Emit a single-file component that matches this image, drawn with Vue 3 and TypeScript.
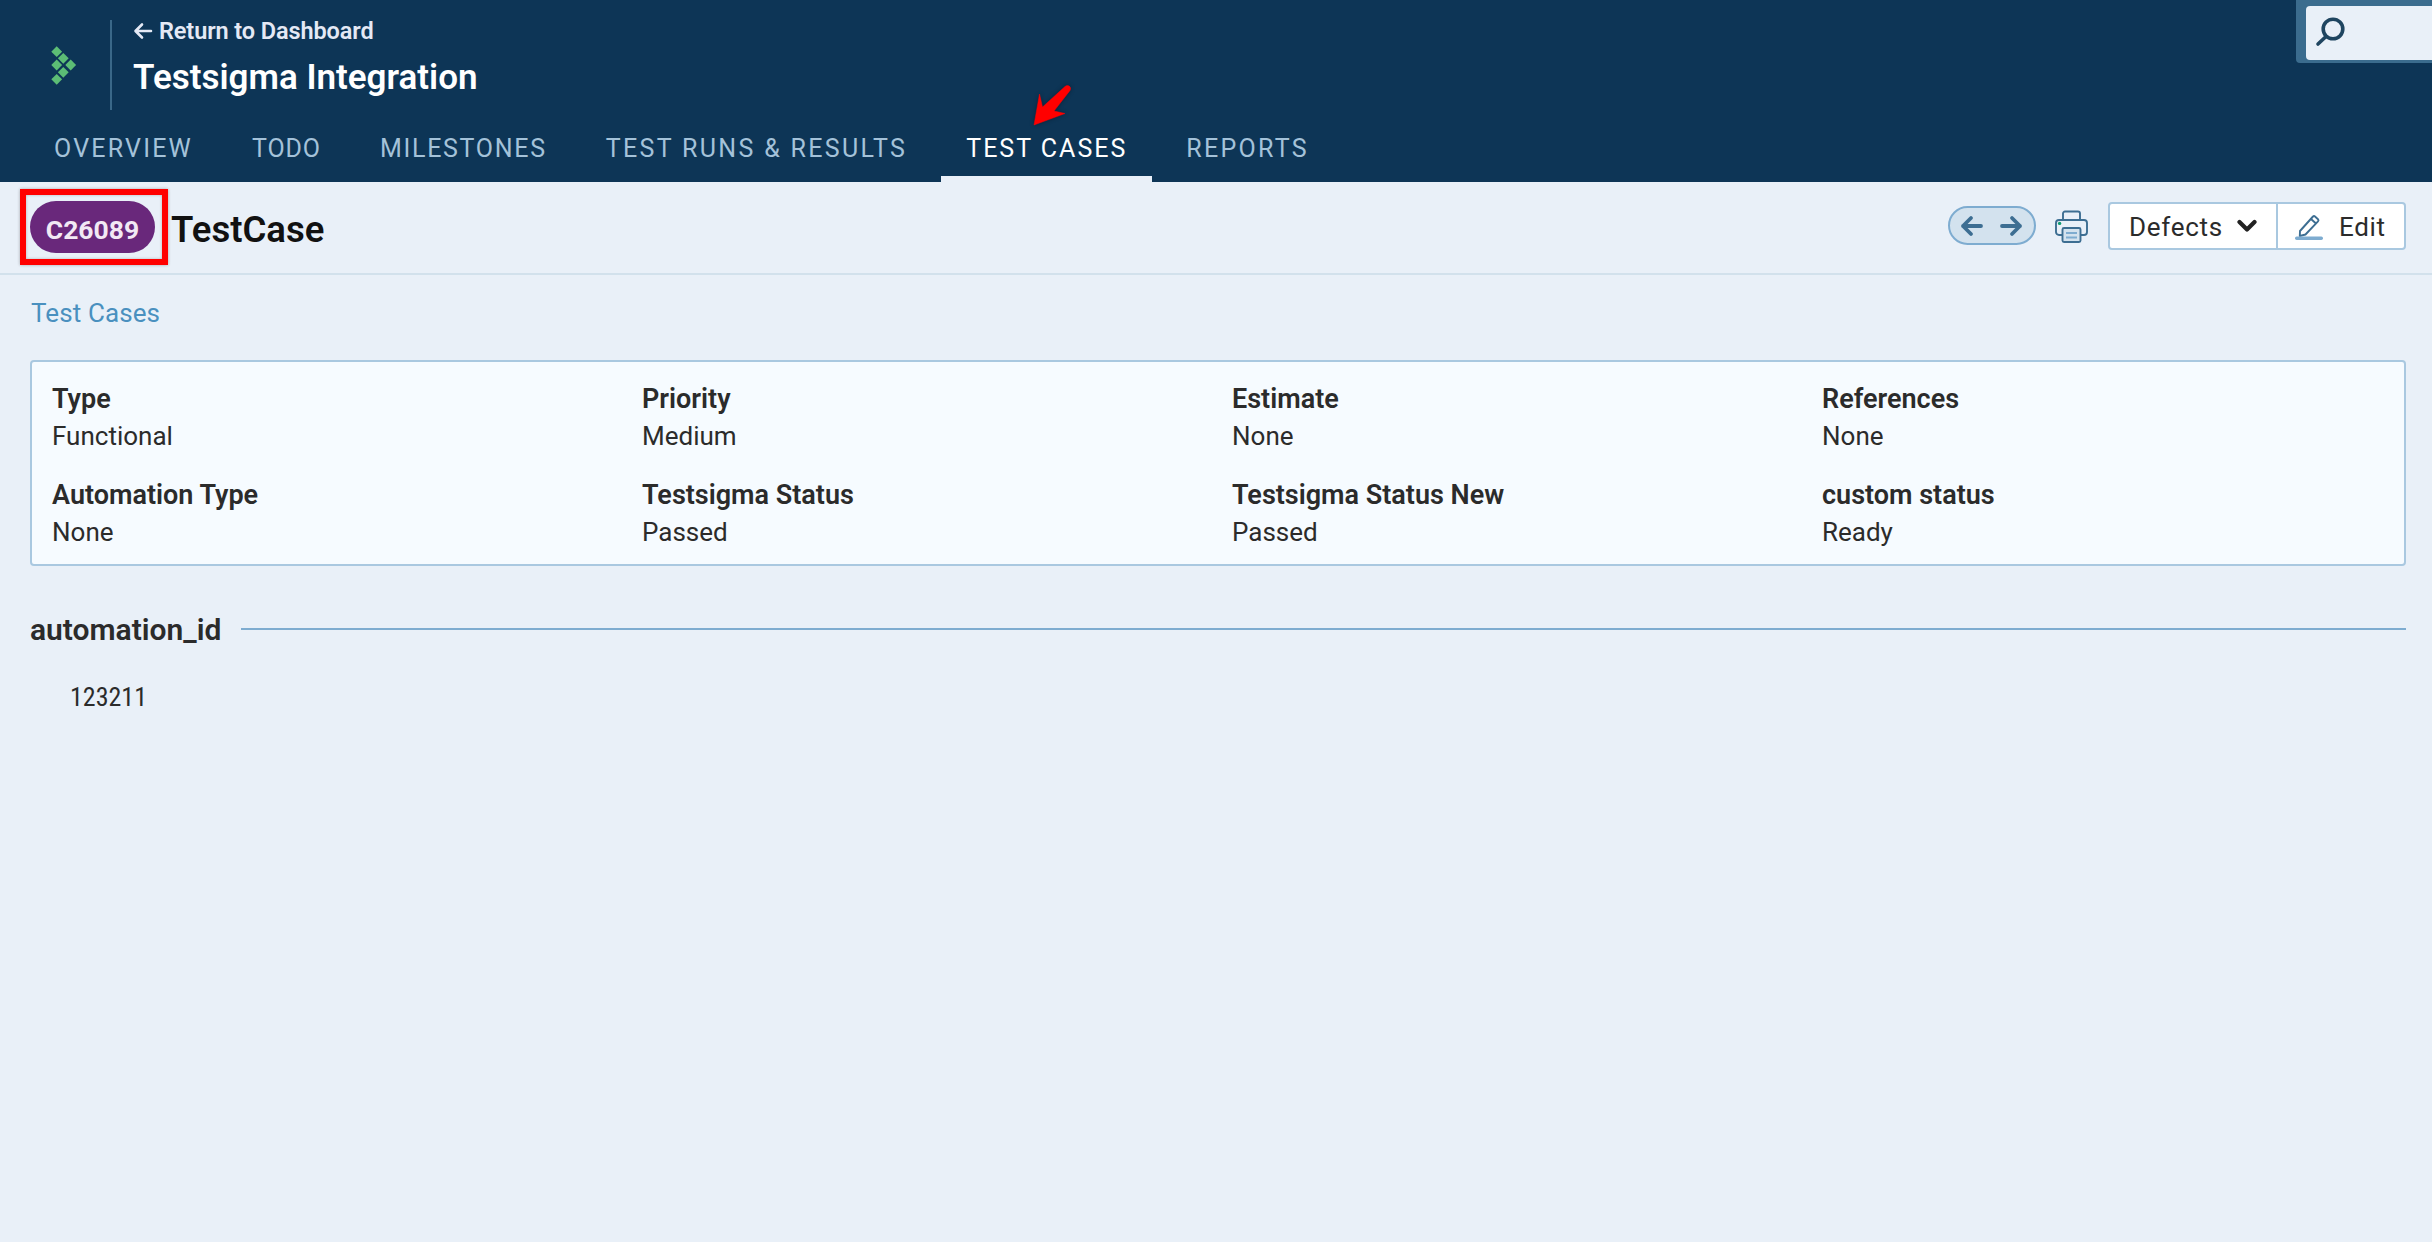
<script setup lang="ts">
const tabs: { label: string; spacing: number; active?: boolean }[] = [
  { label: 'OVERVIEW', spacing: 2.2 },
  { label: 'TODO', spacing: 0.9 },
  { label: 'MILESTONES', spacing: 1.7 },
  { label: 'TEST RUNS & RESULTS', spacing: 2.33 },
  { label: 'TEST CASES', spacing: 2, active: true },
  { label: 'REPORTS', spacing: 2.3 },
]
const fields: { label: string; value: string }[] = [
  { label: 'Type', value: 'Functional' },
  { label: 'Priority', value: 'Medium' },
  { label: 'Estimate', value: 'None' },
  { label: 'References', value: 'None' },
  { label: 'Automation Type', value: 'None' },
  { label: 'Testsigma Status', value: 'Passed' },
  { label: 'Testsigma Status New', value: 'Passed' },
  { label: 'custom status', value: 'Ready' },
]
const diamonds: [number, number][] = [
  [6.7, 6.7], [13.3, 13.3], [20.7, 20], [6.7, 20], [13.3, 27.3], [6.7, 34.3],
]
</script>

<template>
  <div class="page">
    <header class="header">
      <div class="top">
        <div class="logo">
          <svg width="28" height="41" viewBox="0 0 28 41">
            <polygon
              v-for="(d, i) in diamonds"
              :key="i"
              :points="`${d[0]},${d[1] - 5.4} ${d[0] + 5.4},${d[1]} ${d[0]},${d[1] + 5.4} ${d[0] - 5.4},${d[1]}`"
              fill="#5cbd75"
            />
          </svg>
        </div>
        <div class="titles">
          <a class="back">
            <svg width="20" height="18" viewBox="0 0 20 18" fill="none" stroke="#e4e9f5" stroke-width="2.6" stroke-linecap="round" stroke-linejoin="round">
              <path d="M18 9H3M9 2.5 2.500 9 9 15.5" />
            </svg>
            <span>Return to Dashboard</span>
          </a>
          <h1 class="title">Testsigma Integration</h1>
        </div>
      </div>
      <nav class="tabs">
        <a
          v-for="t in tabs"
          :key="t.label"
          class="tab"
          :class="{ active: t.active }"
          :style="{ letterSpacing: `${t.spacing}px` }"
        >{{ t.label }}</a>
      </nav>
      <svg class="arrow" width="44" height="46" viewBox="0 0 44 46">
        <path d="M2 43 7.5 12 10.5 25 33 4.5c3-2.5 7 .5 5 4L22 29l11 2.5Z" fill="#f00" stroke="#f00" stroke-width=".5" stroke-linejoin="round" />
      </svg>
      <div class="search">
        <div class="search-box">
          <svg width="30" height="32" viewBox="0 0 30 32" fill="none" stroke="#1f4560" stroke-linecap="round">
            <circle cx="18" cy="12" r="9.8" stroke-width="3.6" />
            <path d="M10.5 20 3 27" stroke-width="3.6" />
          </svg>
        </div>
      </div>
    </header>

    <div class="case-bar">
      <div class="case-left">
        <div class="highlight"><span class="pill">C26089</span></div>
        <h2 class="case-name">TestCase</h2>
      </div>
      <div class="case-right">
        <div class="pager">
          <svg width="24" height="22" viewBox="0 0 24 22" fill="none" stroke="#3d6e92" stroke-width="3.8" stroke-linecap="round" stroke-linejoin="round">
            <path d="M21 11H3M11 3 3 11l8 8" />
          </svg>
          <svg width="24" height="22" viewBox="0 0 24 22" fill="none" stroke="#3d6e92" stroke-width="3.8" stroke-linecap="round" stroke-linejoin="round">
            <path d="M3 11h18M13 3l8 8-8 8" />
          </svg>
        </div>
        <svg class="printer" width="33" height="33" viewBox="0 0 33 33" fill="none" stroke="#3d6e92" stroke-width="1.9">
          <path d="M8 10V3.5A2 2 0 0 1 10 1.5h13a2 2 0 0 1 2 2V10" />
          <path d="M7 25H4a3 3 0 0 1-3-3V13a3 3 0 0 1 3-3h25a3 3 0 0 1 3 3v9a3 3 0 0 1-3 3h-3" />
          <rect x="7.5" y="18" width="18" height="14" rx="1.5" fill="#d3e2ee" />
          <path d="M11 23h11M11 27.5h11" stroke="#7eacd0" />
          <circle cx="4.6" cy="13.4" r="1.7" fill="#0d9a70" stroke="none" />
        </svg>
        <div class="btn-group">
          <button class="btn defects">
            <span class="btn-text">Defects</span>
            <svg width="20" height="14" viewBox="0 0 20 14" fill="none" stroke="#222" stroke-width="4.2" stroke-linecap="round" stroke-linejoin="round">
              <path d="M2.5 3 10 10.500 17.500 3" />
            </svg>
          </button>
          <button class="btn edit">
            <svg width="28" height="28" viewBox="0 0 28 28" fill="none">
              <path d="M5 19 18 4.500a1.500 1.500 0 0 1 2 0l3 2.700a1.500 1.500 0 0 1 0 2.100L10.500 22.500 4.800 24Z" stroke="#3d6e92" stroke-width="1.900" stroke-linejoin="round" />
              <path d="M16 7l5 4.500" stroke="#3d6e92" stroke-width="1.900" />
              <rect x="0" y="24.500" width="28" height="3.500" rx="1.700" fill="#7eacd0" />
            </svg>
            <span class="btn-text">Edit</span>
          </button>
        </div>
      </div>
    </div>

    <main class="content">
      <a class="crumb">Test Cases</a>
      <section class="card">
        <div v-for="f in fields" :key="f.label" class="field">
          <div class="f-label">{{ f.label }}</div>
          <div class="f-value">{{ f.value }}</div>
        </div>
      </section>
      <div class="section-head">
        <span class="section-title">automation_id</span>
        <span class="section-rule"></span>
      </div>
      <div class="section-body">123211</div>
    </main>
  </div>
</template>

<style>
html, body { margin: 0; background: #e9f0f8; }
</style>

<style scoped>
.page {
  min-height: 1242px;
  background: #e9f0f8;
  font-family: Roboto, "Liberation Sans", sans-serif;
  color: #2b2b2b;
  overflow: hidden;
}
.header {
  position: relative;
  height: 182px;
  background: #0d3556;
  display: flex;
  flex-direction: column;
}
.top { display: flex; height: 124px; }
.logo {
  width: 112px;
  height: 90px;
  margin-top: 20px;
  border-right: 2px solid #3a6888;
  display: flex;
  align-items: center;
  padding-left: 50px;
  box-sizing: border-box;
}
.titles { padding-left: 21px; display: flex; flex-direction: column; }
.back {
  display: flex;
  align-items: center;
  gap: 6px;
  height: 24px;
  margin-top: 19px;
  color: #e4e9f5;
  font-size: 23.5px;
  font-weight: 600;
  letter-spacing: -0.1px;
}
.title {
  margin: 15px 0 0;
  color: #fff;
  font-size: 35px;
  line-height: 40px;
  font-weight: 600;
}
.tabs { display: flex; gap: 9px; padding-left: 29px; height: 58px; }
.tab {
  padding: 0 25px;
  height: 52px;
  line-height: 50px;
  font-size: 25px;
  color: #a4c2d9;
  font-weight: 400;
  white-space: nowrap;
}
.tab.active { color: #fff; border-bottom: 6px solid #e9f0f8; }
.arrow { position: absolute; left: 1032px; top: 82px; filter: drop-shadow(0 0 2px rgba(0,0,0,.35)); }
.search {
  position: absolute;
  left: 2296px;
  right: 0;
  top: 0;
  height: 63px;
  box-sizing: border-box;
  padding: 6px 0 3px 10px;
  background: #3b6c8e;
  border-bottom-left-radius: 4px;
}
.search-box {
  height: 100%;
  background: #e9f0f8;
  border-radius: 4px 0 0 4px;
  display: flex;
  align-items: center;
  padding-left: 9px;
}
.case-bar {
  height: 91px;
  box-sizing: content-box;
  border-bottom: 2px solid #d2e1ec;
  display: flex;
  align-items: flex-start;
  justify-content: space-between;
  padding: 0 26px 0 20px;
}
.case-left { display: flex; align-items: center; margin-top: 7px; }
.highlight {
  width: 148px;
  height: 76px;
  box-sizing: border-box;
  border: 6px solid #f00;
  box-shadow: 0 0 3px rgba(0,0,0,.3), inset 0 0 3px rgba(0,0,0,.25);
  display: flex;
  align-items: center;
  padding-left: 4px;
}
.pill {
  width: 125px;
  height: 52px;
  padding-top: 4px;
  box-sizing: border-box;
  border-radius: 26px;
  background: #69287b;
  color: #f2e9f4;
  font-size: 26.500px;
  font-weight: 700;
  display: flex;
  align-items: center;
  justify-content: center;
}
.case-name { margin: 4px 0 0 3px; font-size: 36.500px; font-weight: 600; color: #111; }
.case-right { display: flex; align-items: flex-start; margin-top: 20px; }
.pager {
  width: 88px;
  height: 39px;
  margin-top: 4px;
  box-sizing: border-box;
  border: 2px solid #7eacd0;
  border-radius: 20px;
  background: #d3e2ee;
  display: flex;
  align-items: center;
  justify-content: space-between;
  padding: 0 11px 0 10px;
}
.printer { margin: 8px 20px 0 19px; }
.btn-group {
  width: 298px;
  height: 48px;
  box-sizing: border-box;
  border: 2px solid #a9c8e0;
  border-radius: 4px;
  background: #fff;
  display: flex;
}
.btn {
  border: 0;
  background: none;
  padding: 0;
  font: inherit;
  font-size: 26px;
  color: #2b2b2b;
  letter-spacing: 0.7px;
  display: flex;
  align-items: center;
}
.btn-text { padding-top: 2px; }
.defects {
  width: 168px;
  border-right: 2px solid #a9c8e0;
  padding-left: 19px;
  gap: 14px;
}
.edit { flex: 1; padding-left: 17px; gap: 16px; }
.content { padding: 23px 26px 0 30px; }
.crumb {
  display: block;
  color: #4a90bf;
  font-size: 26px;
  line-height: 30px;
  margin-left: 1px;
  letter-spacing: 0.1px;
}
.card {
  margin: 32px 0 0 0;
  height: 206px;
  box-sizing: border-box;
  border: 2px solid #a9c8e0;
  border-radius: 4px;
  background: #f6fbff;
  padding: 20px 0 0 20px;
  display: grid;
  grid-template-columns: repeat(4, 590px);
  grid-auto-rows: 96px;
}
.f-label { font-size: 27px; line-height: 34px; font-weight: 600; }
.f-value { font-size: 26px; line-height: 40px; font-weight: 400; }
.section-head { display: flex; align-items: center; gap: 20px; margin-top: 46px; height: 34px; }
.section-title { font-size: 30px; font-weight: 600; }
.section-rule { flex: 1; height: 2px; background: #7eacd0; }
.section-body { margin: 34px 0 0 40px; font-size: 26px; line-height: 34px; font-stretch: 85%; }
</style>
